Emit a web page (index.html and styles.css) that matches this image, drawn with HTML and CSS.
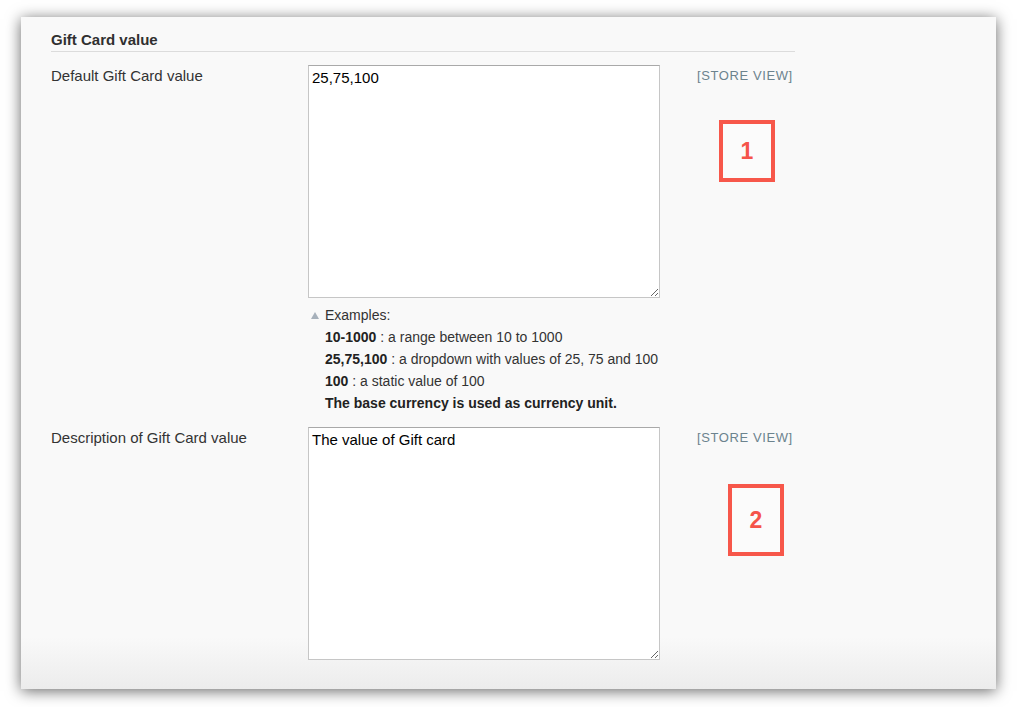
FILE: index.html
```html
<!DOCTYPE html>
<html>
<head>
<meta charset="utf-8">
<link rel="stylesheet" href="styles.css">
</head>
<body>
<div class="panel">
  <div class="content">
    <h3 class="section-title">Gift Card value</h3>
    <div class="row">
      <div class="label">Default Gift Card value</div>
      <div class="value">
        <textarea class="input">25,75,100</textarea>
        <div class="hint">
          <div class="hint-head"><span class="tri"></span>Examples:</div>
          <div><b>10-1000</b> : a range between 10 to 1000</div>
          <div><b>25,75,100</b> : a dropdown with values of 25, 75 and 100</div>
          <div><b>100</b> : a static value of 100</div>
          <div><b>The base currency is used as currency unit.</b></div>
        </div>
      </div>
      <div class="scope">
        <span class="scope-label">[STORE VIEW]</span>
        <div class="marker marker-1">1</div>
      </div>
    </div>
    <div class="row row-2">
      <div class="label">Description of Gift Card value</div>
      <div class="value">
        <textarea class="input">The value of Gift card</textarea>
      </div>
      <div class="scope">
        <span class="scope-label">[STORE VIEW]</span>
        <div class="marker marker-2">2</div>
      </div>
    </div>
  </div>
</div>
</body>
</html>
```

FILE: styles.css
```css
html, body {
  margin: 0;
  padding: 0;
  background: #ffffff;
}
body {
  font-family: "Liberation Sans", Arial, sans-serif;
  color: #333333;
  padding: 17px 21px 18px 21px;
}
.panel {
  height: 672px;
  background: linear-gradient(to bottom, #f9f9f9 0, #f9f9f9 620px, #ececec 672px);
  box-shadow: 0 2px 14px rgba(0, 0, 0, 0.6);
  overflow: hidden;
}
.content {
  width: 744px;
  margin-left: 30px;
  padding-top: 14px;
}
.section-title {
  margin: 0;
  font-size: 15px;
  line-height: 18px;
  font-weight: bold;
  color: #303030;
  padding-bottom: 2px;
  border-bottom: 1px solid #dcdcdc;
}
.row {
  display: flex;
  margin-top: 13px;
}
.label {
  width: 257px;
  flex: none;
  font-size: 15px;
  line-height: 18px;
  padding-top: 2px;
  color: #333;
}
.value {
  width: 352px;
  flex: none;
}
.input {
  display: block;
  box-sizing: border-box;
  width: 352px;
  height: 233px;
  margin: 0;
  padding: 3px 3px;
  font-family: "Liberation Sans", Arial, sans-serif;
  font-size: 15px;
  line-height: 18px;
  color: #000;
  background: #fff;
  border: 1px solid #c6c6c6;
  border-top-color: #a9a9a9;
  border-radius: 0;
  outline: none;
}
.hint {
  margin-top: 6px;
  padding-left: 17px;
  font-size: 14px;
  line-height: 22px;
  color: #333;
}
.hint b {
  color: #222;
}
.hint-head {
  position: relative;
}
.tri {
  position: absolute;
  left: -14px;
  top: 8px;
  width: 0;
  height: 0;
  border-left: 4px solid transparent;
  border-right: 4px solid transparent;
  border-bottom: 7px solid #a7b1bb;
}
.scope {
  margin-left: 37px;
  display: flex;
  flex-direction: column;
  align-items: flex-start;
}
.scope-label {
  font-size: 13px;
  letter-spacing: 0.6px;
  line-height: 16px;
  padding-top: 3px;
  color: #6c838e;
}
.marker {
  box-sizing: border-box;
  border: 4px solid #f7574a;
  background: #fbfbfb;
  color: #f5544a;
  font-weight: bold;
  font-size: 23px;
  display: flex;
  align-items: center;
  justify-content: center;
}
.marker-1 {
  width: 56px;
  height: 62px;
  margin-left: 22px;
  margin-top: 36px;
}
.marker-2 {
  width: 56px;
  height: 72px;
  margin-left: 31px;
  margin-top: 38px;
}
```
